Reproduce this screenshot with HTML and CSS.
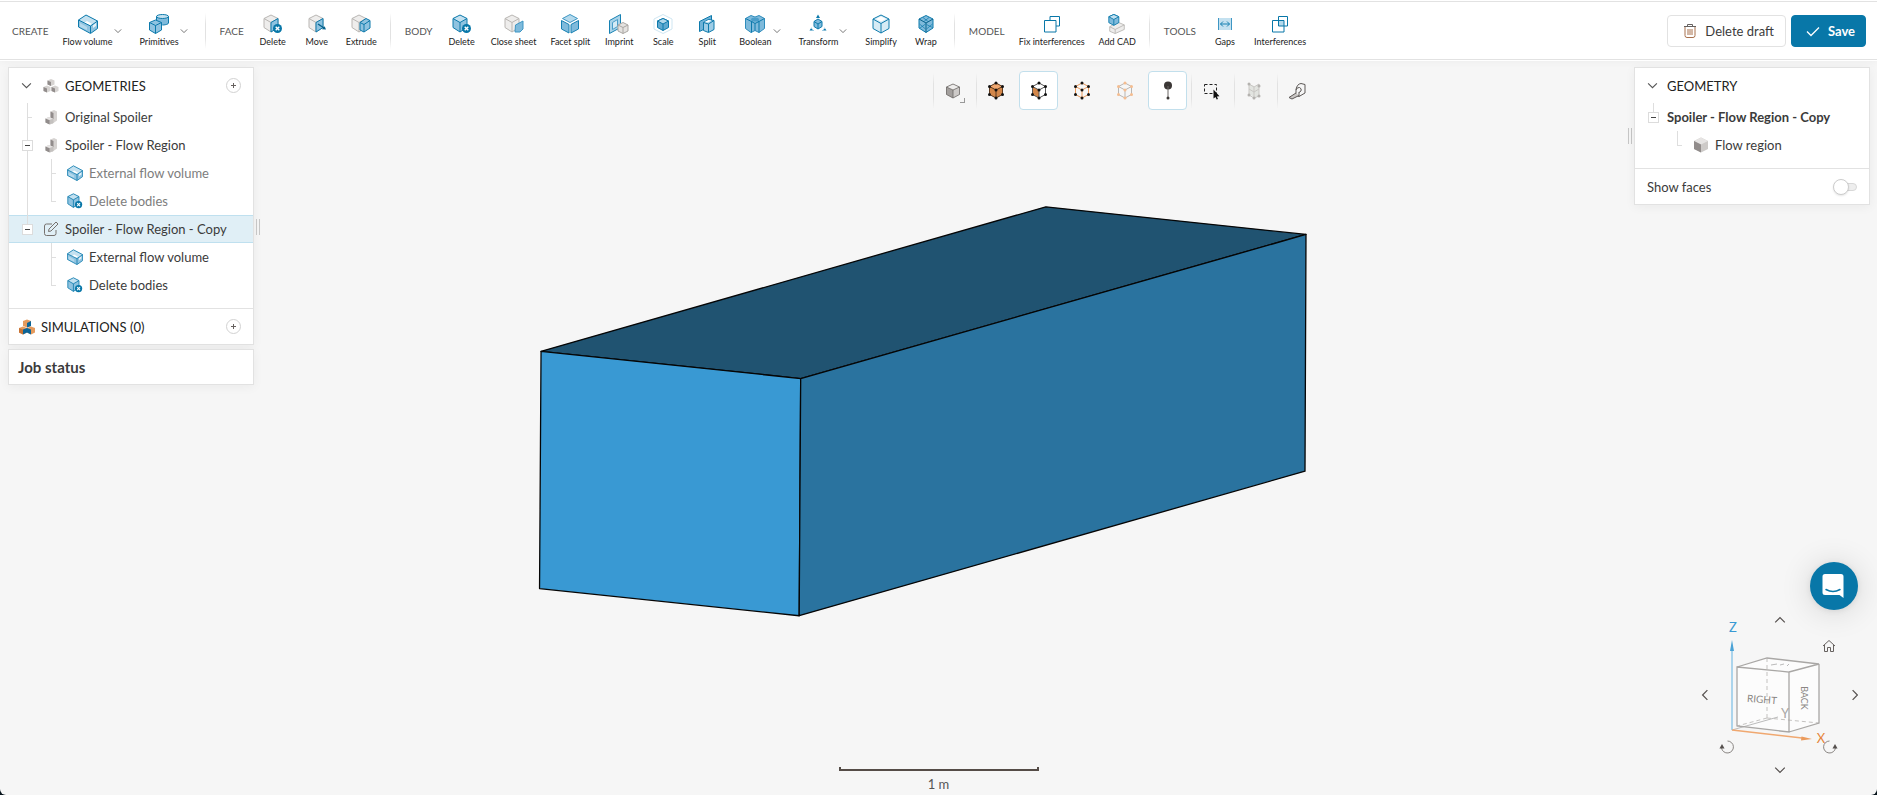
FILE: index.html
```html
<!DOCTYPE html>
<html lang="en">
<head>
<meta charset="utf-8">
<title>Spoiler - Flow Region - Copy</title>
<link rel="stylesheet" href="styles.css">
</head>
<body>
<svg class="sprite" aria-hidden="true">
  <symbol id="chev" viewBox="0 0 10 10"><path d="M1 3l4 4 4-4" fill="none" stroke="currentColor"/></symbol>
  <symbol id="flow" viewBox="0 0 20 20"><path d="M8 1L.5 6v7l12 6.500 7-5V7z" fill="#8fc3e0"/><path d="M8 1L.5 6l12 6 7-5z" fill="#c4e1f0"/><path d="M2 9l7 4v3l-7-3z" fill="#b4d9ec"/><path d="M6 9l3-2 5 3-2 1z" fill="#fff"/><path d="M15 11l3-2v3l-3 2z" fill="#e4f2f9"/><path d="M8 1L.5 6v7l12 6.500 7-5V7zM.5 6l12 6 7-5M12.500 12v7" fill="none" stroke="#0d7aac"/></symbol>
  <symbol id="primitives" viewBox="0 0 20 20"><path d="M7.500 2.500v6l4 2.500c4 .500 8-.500 8-2v-7z" fill="#7fbadb"/><ellipse cx="13.500" cy="2.500" rx="6" ry="2" fill="#c4e1f0" stroke="#0d7aac"/><path d="M7.500 2.500V6M19.500 2.500V9c0 1-3 2-6 2" fill="none" stroke="#0d7aac"/><path d="M6.500 6L.5 8.500V16l6 3.500 6-3.500V8.500z" fill="#8fc3e0" stroke="#0d7aac"/><path d="M.5 8.500l6 3 6-3M6.500 11.500v8" fill="none" stroke="#0d7aac"/></symbol>
  <symbol id="gcube" viewBox="0 0 20 20"><path d="M8 1L1 4.500v9L8 18l7-4.500v-9z" fill="#eeedec" stroke="#b9b6b3"/><path d="M1 4.500l7 4 7-4M8 8.500V18" fill="none" stroke="#b9b6b3"/></symbol>
  <symbol id="bcube" viewBox="0 0 20 20"><path d="M8 1L1 4.500v9L8 18l7-4.500v-9z" fill="#8fc3e0"/><path d="M8 1L1 4.500l7 4 7-4z" fill="#c4e1f0"/><path d="M8 1L1 4.500v9L8 18l7-4.500v-9zM1 4.500l7 4 7-4M8 8.500V18" fill="none" stroke="#0d7aac"/></symbol>
  <symbol id="xbadge" viewBox="0 0 20 20"><circle cx="14.500" cy="14.500" r="4.500" fill="#0877a8"/><path d="M12.700 12.700l3.600 3.600m0-3.600l-3.600 3.600" stroke="#fff" stroke-width="1.400"/></symbol>
  <symbol id="face-delete" viewBox="0 0 20 20"><use href="#gcube"/><path d="M8 8.500l7-4v9L8 18z" fill="#8fc3e0" stroke="#0d7aac"/><use href="#xbadge"/></symbol>
  <symbol id="face-move" viewBox="0 0 20 20"><g transform="translate(1)"><use href="#gcube"/><path d="M8 8.500l7-4v9L8 18z" fill="#8fc3e0" stroke="#0d7aac"/><path d="M10 10l6 4" stroke="#07628c" stroke-width="1.500"/><path d="M18 15.500l-4-.3 2.600-3z" fill="#07628c"/></g></symbol>
  <symbol id="face-extrude" viewBox="0 0 20 20"><use href="#gcube"/><path d="M9 8.500l6-4 4 2v7.500l-6 4-4-2z" fill="#8fc3e0" stroke="#0d7aac"/><path d="M9 8.500l4 2 6-4M13 10.500V18" fill="none" stroke="#0d7aac"/></symbol>
  <symbol id="body-delete" viewBox="0 0 20 20"><use href="#bcube"/><use href="#xbadge"/></symbol>
  <symbol id="close-sheet" viewBox="0 0 20 20"><use href="#gcube"/><path d="M11.500 11l7.500-4v8l-3 3h-5z" fill="#7fbadb" stroke="#3e96c4"/></symbol>
  <symbol id="facet" viewBox="0 0 20 20"><path d="M10 .5l7.500 4L10 8.500l-7.500-4z" fill="#b4d9ec" stroke="#3e96c4"/><path d="M1.500 6.500L9 10.500v8.500l-7.500-4zM18.500 6.500L11 10.500v8.500l7.500-4z" fill="#7fbadb" stroke="#1681b3"/></symbol>
  <symbol id="imprint" viewBox="0 0 20 20"><path d="M.5 6.500l11-6v13l-11 6z" fill="#a9d3e9" stroke="#1681b3"/><path d="M3.500 8.500l5-3v7l-5 3z" fill="#d6ebf5" stroke="#4a9dc9"/><path d="M14 8.500l5 2.500v6l-5 2.500L9 17v-6z" fill="#e4e2e0" stroke="#aaa6a3"/><path d="M9 11l5 2.500 5-2.500m-5 2.500v6" fill="none" stroke="#aaa6a3"/></symbol>
  <symbol id="scale" viewBox="0 0 20 20"><path d="M10 .5l9 4.500v10l-9 4.500L1 15V5z" fill="none" stroke="#cfe6f2"/><path d="M10 4.500L4.500 7v6.500l5.500 3 5.500-3V7z" fill="#5fa9d0" stroke="#0d7aac"/><path d="M10 4.500L4.500 7 10 10l5.500-3z" fill="#b4d9ec" stroke="#0d7aac"/><path d="M10 10v6.500" stroke="#0d7aac"/></symbol>
  <symbol id="split" viewBox="0 0 20 20"><path d="M2.500 7.500l12-6v10l-12 6z" fill="#6fb2d7" stroke="#0d7aac"/><path d="M6.500 8.500l5-3 5.500 1v9l-5.500 3-5-2z" fill="#9fcde6" stroke="#0d7aac"/><path d="M6.500 8.500l5 1.500L17 6.500M11.500 10v8" fill="none" stroke="#0d7aac"/><path d="M7.500 8l4-2 3 .6-3.500 2z" fill="#fff"/></symbol>
  <symbol id="boolean" viewBox="0 0 20 20"><path d="M6 1.500l-5.500 3v10l5.500 4 4-2 4 2 5.500-4v-10l-5.500-3-4 1.500z" fill="#7fbadb" stroke="#2e8cbc"/><path d="M.5 4.500l6 3 3.500-2 4 2 5.500-3M6.500 7.500v11M14 7.500v11M6.500 7.500L10 9.500l4-2M10 9.500v7" fill="none" stroke="#0d7aac"/><ellipse cx="10" cy="5.500" rx="4" ry="2" fill="#4a9dc9"/></symbol>
  <symbol id="transform" viewBox="0 0 20 20"><path d="M10 5L6 7.500v5l4 2.500 4-2.500v-5z" fill="#7fbadb" stroke="#0d7aac"/><path d="M6 7.500L10 10l4-2.500M10 10v5" fill="none" stroke="#0d7aac"/><path d="M8 4l2-3.500L12 4zM1.500 16.500l2-3 1.500 3zM18.500 16.500l-2-3-1.500 3z" fill="#0d7aac"/><path d="M3 14l3 3m11-3l-3 3" stroke="#9fcde6"/></symbol>
  <symbol id="simplify" viewBox="0 0 20 20"><path d="M10 1L2 5v9.500l8 4.500 8-4.500V5z" fill="#d6ebf5" stroke="#0d7aac"/><path d="M2 5l8 4.500L18 5m-8 4.500V19" fill="none" stroke="#0d7aac"/><path d="M10 2.500L5 5l5 2.500L15 5z" fill="#fff"/></symbol>
  <symbol id="wrap" viewBox="0 0 20 20"><path d="M10 1.500L3 5v9l7 4.500 7-4.500V5z" fill="#7fbadb" stroke="#0d7aac"/><path d="M3 5l7 4 7-4m-7 4v9.500" fill="none" stroke="#07628c"/><path d="M7 3.500l5 4M13 3.500L8 7.500M3.500 10l6 5M9.500 10L4 14M16.500 10l-6 5M10.500 10.500l6 3" stroke="#0d7aac" stroke-width=".7"/></symbol>
  <symbol id="fix" viewBox="0 0 20 20"><path d="M8 6V2.500h9.500V12H14M2.500 6.500H14V18H2.500z" fill="none" stroke="#0877a8"/></symbol>
  <symbol id="interf" viewBox="0 0 20 20"><path d="M8.500 6.500H14V12H8.500z" fill="#b4d9ec"/><path d="M8.500 2.500h9V12h-9zM2.500 6.500H14V18H2.500z" fill="none" stroke="#0877a8"/></symbol>
  <symbol id="addcad" viewBox="0 0 20 22"><path d="M2 14l9-5 7 3v5l-10 4.500-6-2.500z" fill="#eeedec" stroke="#bbb8b5"/><path d="M2 14l6 3 10-5M8 17v4.500" fill="none" stroke="#bbb8b5"/><path d="M6.500.5L1 3v6.500l5.500 3 5.500-3V3z" fill="#7fbadb" stroke="#0d7aac"/><path d="M6.500.5L1 3l5.500 3L12 3z" fill="#c4e1f0" stroke="#0d7aac"/><path d="M6.500 6v6.500" stroke="#0d7aac"/></symbol>
  <symbol id="gaps" viewBox="0 0 20 20"><path d="M4 4h12v12H4z" fill="#c4e1f0"/><path d="M3.500 4v12M16.500 4v12" stroke="#3e96c4"/><path d="M5.500 10h9M8 7.500L5.500 10 8 12.500m4-5l2.500 2.500-2.500 2.500" fill="none" stroke="#1681b3"/></symbol>

  <symbol id="solid" viewBox="0 0 16 16"><path d="M8 .5L1 4v8l7 3.500 7-3.500V4z" fill="#cdcac8"/><path d="M8 .5L1 4l7 3.500L15 4z" fill="#e6e4e3"/><path d="M1 4l7 3.500v8L1 12z" fill="#918c8b"/></symbol>
  <symbol id="part" viewBox="0 0 16 16"><path d="M7.500 2.500L11 1l3 1.500v9L9 15l-1.500-3z" fill="#d6d3d1"/><path d="M7.500 2.500l3 1.500v6l-3-1z" fill="#918c8b"/><path d="M2.500 9.500L6 8l4.500 2v4L7 15.500l-4.500-2z" fill="#c4c1bf"/><path d="M2.500 9.500l4 1.500v4.500l-4-2z" fill="#918c8b"/><path d="M2.500 9.500L6 8l4 1.700L6.500 11z" fill="#e6e4e3"/></symbol>
  <symbol id="parts" viewBox="0 0 16 16"><g id="pp"><path d="M8 1l3.500 1.500v4L8 8 4.500 6.500v-4z" fill="#d6d3d1"/><path d="M4.500 2.500L8 4v4L4.500 6.500z" fill="#918c8b"/></g><use href="#pp" x="-4" y="6.500"/><use href="#pp" x="4" y="6.500"/></symbol>
  <symbol id="sims" viewBox="0 0 16 16"><path d="M8 .5L12 2v5L8 8.500 4 7V2z" fill="#e59a5c"/><path d="M8 4l4-2v5L8 8.500z" fill="#0c6598"/><path d="M4 7.500L8 9v4.500L4 15.500 0 13.500V9z" fill="#e59a5c"/><path d="M0 9l4 1.500v5l-4-2z" fill="#c87334"/><path d="M4 10.500L8 9v4.500l-4 2z" fill="#0c6598"/><path d="M12 7.500L16 9v4.500l-4 2-4-2V9z" fill="#e59a5c"/><path d="M8 9l4 1.500v5l-4-2z" fill="#0c6598"/></symbol>
  <symbol id="edit" viewBox="0 0 16 16"><path d="M9 3H3.500Q1.500 3 1.500 5v7.500q0 2 2 2H11q2 0 2-2V9" fill="none" stroke="#77726f"/><path d="M5.500 10.500L6 8l7-7 2 2-7 7z" fill="none" stroke="#77726f"/></symbol>

  <symbol id="pts" viewBox="0 0 20 20"><path d="M10 2L3.500 5.500v8L10 17l6.500-3.500v-8z" fill="none" stroke="currentColor"/><path d="M3.500 5.500L10 9l6.500-3.500M10 9v8" fill="none" stroke="currentColor"/></symbol>
  <symbol id="dots" viewBox="0 0 20 20"><g fill="currentColor"><circle cx="10" cy="2" r="1.500"/><circle cx="3.500" cy="5.500" r="1.500"/><circle cx="16.500" cy="5.500" r="1.500"/><circle cx="10" cy="9" r="1.500"/><circle cx="3.500" cy="13.500" r="1.500"/><circle cx="16.500" cy="13.500" r="1.500"/><circle cx="10" cy="17" r="1.500"/></g></symbol>
</svg>

<div class="app">
<header class="ribbon">
  <h2 class="group">CREATE</h2>
  <button class="tool split"><svg><use href="#flow"/></svg>Flow volume</button><button class="more" aria-label="More flow volume"><svg><use href="#chev"/></svg></button>
  <button class="tool split"><svg><use href="#primitives"/></svg>Primitives</button><button class="more" aria-label="More primitives"><svg><use href="#chev"/></svg></button>
  <i class="rule"></i>
  <h2 class="group">FACE</h2>
  <button class="tool"><svg><use href="#face-delete"/></svg>Delete</button>
  <button class="tool"><svg><use href="#face-move"/></svg>Move</button>
  <button class="tool"><svg><use href="#face-extrude"/></svg>Extrude</button>
  <i class="rule"></i>
  <h2 class="group">BODY</h2>
  <button class="tool"><svg><use href="#body-delete"/></svg>Delete</button>
  <button class="tool"><svg><use href="#close-sheet"/></svg>Close sheet</button>
  <button class="tool"><svg><use href="#facet"/></svg>Facet split</button>
  <button class="tool"><svg><use href="#imprint"/></svg>Imprint</button>
  <button class="tool"><svg><use href="#scale"/></svg>Scale</button>
  <button class="tool"><svg><use href="#split"/></svg>Split</button>
  <button class="tool split"><svg><use href="#boolean"/></svg>Boolean</button><button class="more" aria-label="More boolean"><svg><use href="#chev"/></svg></button>
  <button class="tool split"><svg><use href="#transform"/></svg>Transform</button><button class="more" aria-label="More transform"><svg><use href="#chev"/></svg></button>
  <button class="tool"><svg><use href="#simplify"/></svg>Simplify</button>
  <button class="tool"><svg><use href="#wrap"/></svg>Wrap</button>
  <i class="rule"></i>
  <h2 class="group">MODEL</h2>
  <button class="tool"><svg><use href="#fix"/></svg>Fix interferences</button>
  <button class="tool"><svg><use href="#addcad"/></svg>Add CAD</button>
  <i class="rule"></i>
  <h2 class="group">TOOLS</h2>
  <button class="tool"><svg><use href="#gaps"/></svg>Gaps</button>
  <button class="tool"><svg><use href="#interf"/></svg>Interferences</button>
  <div class="actions">
    <button class="btn"><svg viewBox="0 0 14 16"><path d="M1 3.500h12M4.500 3V1.500h5V3" fill="none" stroke="#66615f"/><path d="M2 4v8.500q0 2 2 2h6q2 0 2-2V4M5 6v6M7 6v6M9 6v6" fill="none" stroke="#a8704c"/></svg>Delete draft</button>
    <button class="btn primary"><svg viewBox="0 0 14 16"><path d="M1 8.500l4 4 8-8" fill="none" stroke="#fff" stroke-width="1.300"/></svg>Save</button>
  </div>
</header>

<main class="workspace">
  <svg class="model" viewBox="0 0 1877 736" role="img" aria-label="Flow region body">
    <g stroke="#050505" stroke-width="1.300" stroke-linejoin="round">
      <path d="M540.500 291.700L1046 147l260.500 27.700L800.500 319z" fill="#205371"/>
      <path d="M540.500 291.700L800.500 319l-1.500 237.500L539 529.300z" fill="#3999d3"/>
      <path d="M800.500 319L1306.500 174.700l-1 237L799 556.500z" fill="#2a739f"/>
    </g>
  </svg>

  <aside class="left">
    <section class="panel">
      <header class="head"><button class="fold" aria-label="Collapse"><svg><use href="#chev"/></svg></button><svg class="ico"><use href="#parts"/></svg><h3>GEOMETRIES</h3><button class="add" aria-label="Add geometry"><svg viewBox="0 0 9 9"><path d="M4.500 2v5M2 4.500h5" stroke="#66615f"/></svg></button></header>
      <ul class="tree">
        <li><div class="row"><i class="slot"></i><svg class="ico"><use href="#part"/></svg>Original Spoiler</div></li>
        <li><div class="row"><button class="box" aria-label="Collapse"></button><svg class="ico"><use href="#part"/></svg>Spoiler - Flow Region</div>
          <ul class="sub muted">
            <li><div class="row"><svg class="ico"><use href="#flow"/></svg>External flow volume</div></li>
            <li><div class="row"><svg class="ico"><use href="#body-delete"/></svg>Delete bodies</div></li>
          </ul></li>
        <li><div class="row selected"><button class="box" aria-label="Collapse"></button><svg class="ico"><use href="#edit"/></svg>Spoiler - Flow Region - Copy</div>
          <ul class="sub">
            <li><div class="row"><svg class="ico"><use href="#flow"/></svg>External flow volume</div></li>
            <li><div class="row"><svg class="ico"><use href="#body-delete"/></svg>Delete bodies</div></li>
          </ul></li>
      </ul>
      <header class="head sims"><svg class="ico"><use href="#sims"/></svg><h3>SIMULATIONS (0)</h3><button class="add" aria-label="Add simulation"><svg viewBox="0 0 9 9"><path d="M4.500 2v5M2 4.500h5" stroke="#66615f"/></svg></button></header>
    </section>
    <section class="panel jobs"><h3>Job status</h3></section>
  </aside>
  <i class="grip grip-left"></i>

  <div class="stage">
    <div class="views">
      <i class="rule"></i>
      <button class="view corner" aria-label="Render mode"><svg viewBox="0 0 20 20"><path d="M10 3L3.500 6v7.500L10 17l6.500-3.500V6z" fill="#cdcac8"/><path d="M3.500 6L10 9v8l-6.500-3.500z" fill="#a39f9d"/><path d="M10 3L3.500 6 10 9l6.500-3z" fill="#eeedec"/><path d="M10 3L3.500 6v7.500L10 17l6.500-3.500V6zM3.500 6L10 9l6.500-3M10 9v8" fill="none" stroke="#6b6765" stroke-width=".8"/></svg></button>
      <i class="rule"></i>
      <button class="view" aria-label="Pick bodies"><svg viewBox="0 0 20 20"><path d="M10 2L3.500 5.500v8L10 17l6.500-3.500v-8z" fill="#d3874a"/><path d="M10 2L3.500 5.500 10 9l6.500-3.500z" fill="#f0a870"/><g color="#5c3a20"><use href="#pts"/></g><use href="#dots"/></svg></button>
      <button class="view on" aria-label="Pick faces"><svg viewBox="0 0 20 20"><path d="M3.500 5.500L10 9v8l-6.500-3.500z" fill="#d3874a"/><g color="#555"><use href="#pts"/></g><use href="#dots"/></svg></button>
      <button class="view" aria-label="Pick edges"><svg viewBox="0 0 20 20"><g color="#eb9a5b"><use href="#pts"/></g><use href="#dots"/></svg></button>
      <button class="view" aria-label="Pick vertices"><svg viewBox="0 0 20 20"><g color="#b9b6b3"><use href="#pts"/></g><g color="#f5bd90"><use href="#dots"/></g></svg></button>
      <button class="view on" aria-label="Probe"><svg viewBox="0 0 20 20"><circle cx="10" cy="4.500" r="4" fill="#3b3735"/><path d="M10 5v12" stroke="#6b6765"/><circle cx="10" cy="17" r="1.500" fill="#3b3735"/></svg></button>
      <i class="rule"></i>
      <button class="view" aria-label="Box select"><svg viewBox="0 0 20 20"><path d="M3.500 3.500h12v9h-12z" fill="none" stroke="#222" stroke-dasharray="3 2"/><path d="M12.500 8.500v9l2-1.500 1.200 2.500 1.300-.6-1.200-2.400 2.700-.3z" fill="#111"/></svg></button>
      <i class="rule"></i>
      <button class="view" aria-label="Mesh clip"><svg viewBox="0 0 20 20"><g color="#c9c7c4"><path d="M5 3l5 2v11l-5-3zM10 6l5-3v11l-5 3z" fill="#e2e4e0"/><path d="M5 3l5 3 5-3M5 3v11l5 3 5-2V3M10 6v11M5 8l5 3 5-3" fill="none" stroke="currentColor"/><g fill="#b4b2af"><circle cx="5" cy="3" r="1.500"/><circle cx="15" cy="5" r="1.500"/><circle cx="5" cy="14" r="1.500"/><circle cx="10" cy="17" r="1.500"/><circle cx="15" cy="15" r="1.500"/></g></g></svg></button>
      <i class="rule"></i>
      <button class="view" aria-label="Measure"><svg viewBox="0 0 20 20"><path d="M9 14V8.500Q10 3 14 2.500l4 1V12l-6 3.500zM12 15.500V11M9 9q1-3 3.500-2.500Q15 7.500 14 10l-2 1.500" fill="none" stroke="#5c5856"/><path d="M9 12l-7 4.500 3 1.500 7-3.500" fill="#c9c6c4" stroke="#5c5856"/></svg></button>
    </div>
  </div>

  <i class="grip grip-right"></i>
  <aside class="right">
    <section class="panel">
      <header class="head"><button class="fold" aria-label="Collapse"><svg><use href="#chev"/></svg></button><h3>GEOMETRY</h3></header>
      <ul class="tree">
        <li><div class="row strong"><button class="box" aria-label="Collapse"></button>Spoiler - Flow Region - Copy</div>
          <ul class="sub"><li><div class="row"><svg class="ico"><use href="#solid"/></svg>Flow region</div></li></ul></li>
      </ul>
      <label class="faces">Show faces<input type="checkbox" role="switch"></label>
    </section>
  </aside>

  <div class="ruler"><i></i>1 m</div>

  <button class="chat" aria-label="Open chat"><svg viewBox="0 0 24 26"><path d="M3 1h16q2.500 0 2.500 2.500V25l-4-3H3Q.5 22 .5 19.500v-16Q.5 1 3 1z" fill="#fff"/><path d="M4 16.500q7 4 14 0" fill="none" stroke="#0877a8" stroke-width="1.500" stroke-linecap="round"/></svg></button>

  <div class="gizmo">
    <svg class="cube" viewBox="0 0 166 166" role="img" aria-label="Orientation cube">
      <path d="M40 55l30-9 52 6v59l-30 9-52-6z" fill="#fcfcfc"/>
      <path d="M70 46v60M70 106l52 5M70 106l-30 8" fill="none" stroke="#c4c2c0" stroke-dasharray="4 3"/>
      <path d="M35 118l46-13" stroke="#bbb"/>
      <path d="M74 53l6-1m3 1l4-1m3 2l2-2" stroke="#bbb"/>
      <path d="M40 55l52 5v60l-52-6zM40 55l30-9 52 6-30 8M122 52v59l-30 9" fill="none" stroke="#a9a7a5" stroke-width="1.300"/>
      <path d="M35 118V34" stroke="#8cc6e8" stroke-width="1.400"/><path d="M35 28l2 11h-4z" fill="#4ba3d6"/>
      <path d="M35 118l70 8" stroke="#f0a870" stroke-width="1.400"/><path d="M115 127l-11 1.500.5-4z" fill="#eb9a5b"/>
      <text class="axis z" x="36" y="20">Z</text>
      <text class="axis x" x="124" y="131">X</text>
      <text class="axis y" x="88" y="106">Y</text>
      <text class="side" x="65" y="91" transform="rotate(5 65 87)">RIGHT</text>
      <text class="side back" transform="translate(104 86) rotate(90)">BACK</text>
    </svg>
    <button class="nav up" aria-label="Up"><svg><use href="#chev"/></svg></button>
    <button class="nav lf" aria-label="Left"><svg><use href="#chev"/></svg></button>
    <button class="nav rt" aria-label="Right"><svg><use href="#chev"/></svg></button>
    <button class="nav dn" aria-label="Down"><svg><use href="#chev"/></svg></button>
    <button class="nav home" aria-label="Home"><svg viewBox="0 0 14 14"><path d="M1 7l6-5.500L13 7M2.500 6v6.500h3V8.500h3v4h3V6" fill="none" stroke="#66615f"/></svg></button>
    <button class="nav ccw" aria-label="Rotate left"><svg viewBox="0 0 16 16"><path d="M8.500 2a6 6 0 1 1-6 7" fill="none" stroke="#8a8683"/><path d="M.5 9.500L3 5l2.500 4.500z" fill="#55504e"/></svg></button>
    <button class="nav cw" aria-label="Rotate right"><svg viewBox="0 0 16 16"><path d="M7.500 2a6 6 0 1 0 6 7" fill="none" stroke="#8a8683"/><path d="M15.500 9.500L13 5l-2.500 4.500z" fill="#55504e"/></svg></button>
  </div>
</main>
</div>
</body>
</html>
```
FILE: styles.css
```css
* { box-sizing: border-box; }
html { background: #07141c; }
body { margin: 0; font-family: Lato, "Open Sans", sans-serif; font-size: 13px; line-height: 16px; color: #3b3b3b; }
button { padding: 0; border: 0; background: none; font: inherit; color: inherit; cursor: pointer; }
h2, h3 { margin: 0; font: inherit; }
ul { margin: 0; padding: 0; list-style: none; }
svg { display: block; flex: none; }
.sprite { position: absolute; width: 0; height: 0; }

.app { display: flex; flex-direction: column; height: 100vh; overflow: hidden; background: #f6f6f6; border-radius: 0 0 6px 6px; }

.ribbon { display: flex; align-items: center; height: 59px; flex: none; margin-top: 1px; padding: 0 11px 0 12px; background: #fff; border-top: 1px solid #e2e2e2; border-bottom: 1px solid #e2e2e2; box-shadow: 0 0 0 1px #fff, 0 2px 8px rgba(0, 0, 0, .04); position: relative; z-index: 1; }
.group { margin-right: 7px; font-size: 10px; color: #555; }
.tool { display: flex; flex-direction: column; align-items: center; gap: 2px; min-width: 44px; padding: 0 7px; font-size: 9px; line-height: 12px; color: #222; white-space: nowrap; }
.tool svg { width: 20px; height: 20px; }
.tool.split { min-width: 38px; padding-right: 1px; }
.tool + .tool.split { margin-left: 3px; }
.more { margin-right: 11px; color: #555; }
.more svg { width: 8px; height: 8px; }
.rule { width: 1px; height: 36px; background: linear-gradient(transparent, #e2e2e2 30%, #e2e2e2 70%, transparent); }
.ribbon .rule { margin: 0 14px 0 6px; }
.actions { display: flex; gap: 5px; margin-left: auto; }
.btn { display: flex; align-items: center; gap: 8px; height: 32px; padding: 0 11px 0 15px; border: 1px solid #e2e2e2; border-radius: 4px; font-size: 13px; white-space: nowrap; }
.btn svg { width: 14px; height: 16px; }
.primary { padding: 0 10px 0 14px; background: #0877a8; border-color: #0877a8; color: #fff; font-weight: 700; }

.workspace { position: relative; display: flex; align-items: flex-start; flex: 1; min-height: 0; padding: 7px 7px 0 8px; }
.model { position: absolute; inset: 0; width: 100%; height: 100%; }
.left, .right, .stage, .grip { position: relative; }
.left { width: 246px; flex: none; }
.right { width: 236px; flex: none; }
.stage { flex: 1; min-width: 0; }
.panel { background: #fff; border: 1px solid #e2e2e2; box-shadow: 0 2px 10px rgba(0, 0, 0, .05); }
.head { display: flex; align-items: center; height: 35px; padding: 0 12px; color: #222; }
.head h3 { flex: 1; font-size: 13px; }
.fold { width: 11px; margin-right: 11px; color: #555; }
.fold svg { width: 11px; height: 11px; }
.head .ico { margin-right: 6px; }
.ico { width: 16px; height: 16px; }
.add { display: grid; place-items: center; width: 15px; height: 15px; border: 1px solid #d2d2d2; border-radius: 50%; }
.add svg { width: 9px; height: 9px; }
.sims { height: 36px; margin-top: 9px; border-top: 1px solid #e2e2e2; padding-left: 10px; }
.jobs { margin-top: 4px; padding: 9px; font-size: 15px; font-weight: 700; }

.row { position: relative; display: flex; align-items: center; height: 28px; padding-left: 13px; white-space: nowrap; }
.row .ico { margin-right: 6px; }
.slot, .box { width: 11px; height: 11px; margin-right: 10px; flex: none; }
.box { position: relative; z-index: 1; background: linear-gradient(#444, #444) center / 5px 1px no-repeat #fff; border: 1px solid #dcdcdc; }
.selected { background: #e0eff6; border-top: 1px solid #bfe0ef; border-bottom: 1px solid #bfe0ef; }
.tree li { position: relative; }
.tree li::before, .tree li::after { content: ""; position: absolute; left: 18px; background: #dedede; }
.tree li::before { z-index: 1; top: 0; width: 1px; height: 100%; }
.tree li::after { top: 14px; width: 5px; height: 1px; }
.tree > li:last-child::before { height: 9px; }
.sub .row { padding-left: 58px; }
.sub li::before, .sub li::after { left: 42px; }
.tree .sub li:last-child::before { height: 14px; }
.muted .row { color: #7d7d7d; }
.strong { font-weight: 700; }
.right .box { margin-right: 8px; }
.right .fold { margin-right: 9px; }

.grip { width: 4px; height: 16px; border: 1px solid #c6c6c6; border-width: 0 1px; }
.grip-left { margin: 152px 0 0 2px; }
.grip-right { margin: 61px 2px 0 0; }

.faces { display: flex; align-items: center; justify-content: space-between; height: 36px; margin-top: 9px; padding: 0 12px; border-top: 1px solid #e2e2e2; }
.faces input { appearance: none; position: relative; width: 15px; height: 8px; margin: 0; border: 1px solid #d8d8d8; border-radius: 4px; background: #eee; }
.faces input::before { content: ""; position: absolute; left: -10px; top: -5px; width: 16px; height: 16px; border: 1px solid #ccc; border-radius: 50%; background: #fff; box-shadow: 0 1px 2px rgba(0, 0, 0, .1); box-sizing: border-box; }

.views { display: flex; align-items: center; gap: 4px; padding: 4px 0 0 calc(49% + 3px); }
.view { display: grid; place-items: center; width: 39px; height: 39px; border: 1px solid transparent; border-radius: 4px; position: relative; color: #111; flex: none; }
.view svg { width: 20px; height: 20px; }
.view.on { background: #fff; border-color: #c2dfec; }
.views .rule { margin-right: -5px; flex: none; }
.corner::after { content: ""; position: absolute; right: 6px; bottom: 6px; width: 4px; height: 4px; border: 1px solid #999; border-width: 0 1px 1px 0; }

.ruler { position: absolute; bottom: 3px; left: 50%; width: 200px; margin-left: -100px; text-align: center; color: #555; }
.ruler i { display: block; height: 4px; margin-bottom: 5px; border: 2px solid #554c47; border-top: 0; }

.chat { position: absolute; right: 19px; bottom: 185px; display: grid; place-items: center; width: 48px; height: 48px; border-radius: 50%; background: #0877a8; box-shadow: 0 1px 6px rgba(0, 0, 0, .08), 0 2px 32px rgba(0, 0, 0, .14); }
.chat svg { width: 24px; height: 26px; }

.gizmo { position: absolute; right: 14px; bottom: 17px; width: 166px; height: 166px; }
.cube { width: 166px; height: 166px; }
.axis { font-size: 13px; text-anchor: middle; }
.z { fill: #3999d3; }
.x { fill: #e5843a; }
.y { fill: #a9a7a5; }
.side { font-size: 10px; text-anchor: middle; fill: #8a8683; }
.back { font-size: 9px; }
.nav { position: absolute; width: 16px; height: 16px; display: grid; place-items: center; color: #55504e; }
.nav svg { width: 12px; height: 12px; }
.up { left: 75px; top: 0; transform: rotate(180deg); }
.dn { left: 75px; top: 150px; }
.lf { left: 0; top: 75px; transform: rotate(90deg); }
.rt { left: 150px; top: 75px; transform: rotate(-90deg); }
.home { left: 124px; top: 26px; }
.ccw { left: 22px; top: 127px; }
.cw { left: 125px; top: 127px; }
.home svg { width: 14px; height: 14px; }
.ccw svg, .cw svg { width: 16px; height: 16px; }
```
